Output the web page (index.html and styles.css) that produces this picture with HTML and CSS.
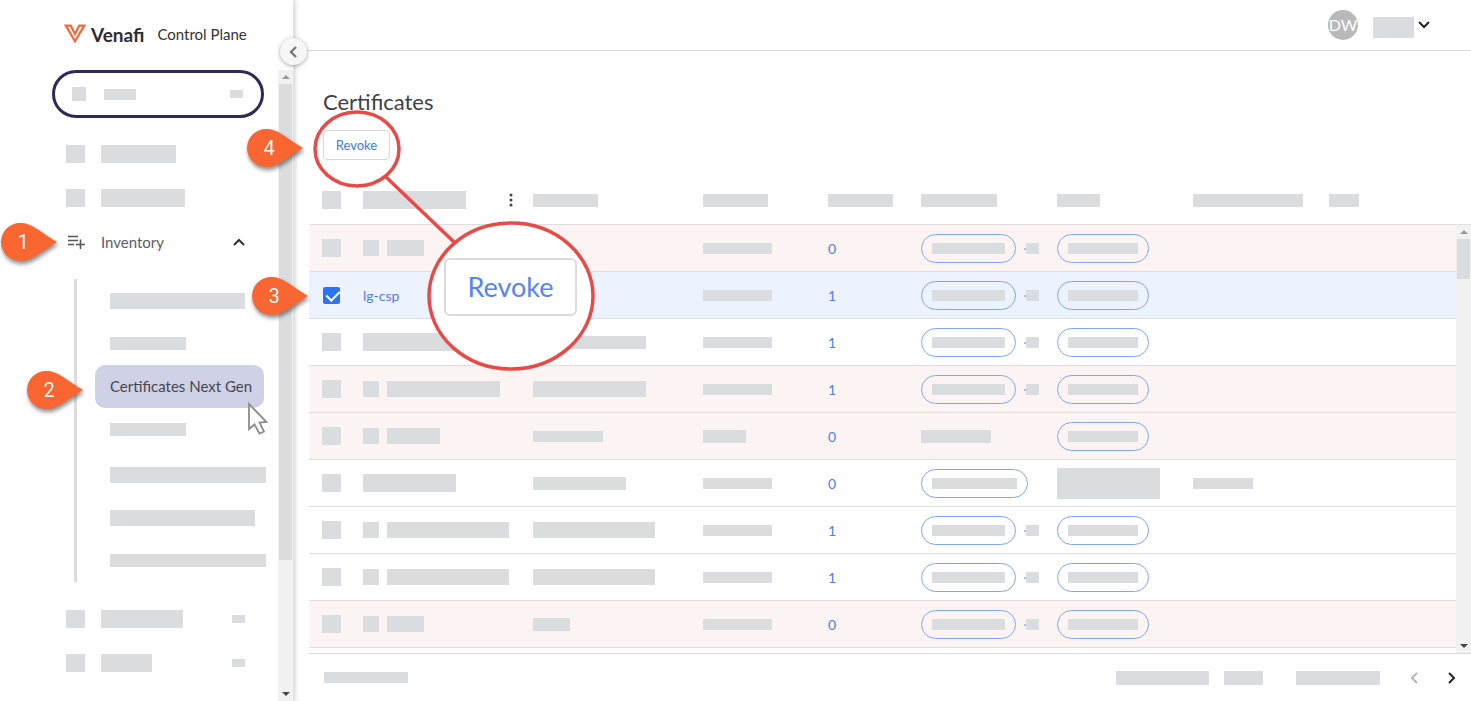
FILE: index.html
```html
<!DOCTYPE html>
<html lang="en">
<head>
    <meta charset="UTF-8">
    <meta name="viewport" content="width=device-width, initial-scale=1.0">
    <title>Venafi Control Plane - Certificates</title>
    <link rel="stylesheet" href="styles.css">
</head>
<body>
    <div class="app">
        <aside class="sidebar">
            <div class="brand">
                <svg class="brand-logo" width="22" height="20" viewBox="0 0 22 20" fill="none" stroke="#f26a3a">
                    <path d="M1.800 1.600H6.800L11 10L15.200 1.600H20.200L11 17.400Z" stroke-width="2.200"/>
                </svg>
                <span class="brand-name">Venafi</span>
                <span class="brand-product">Control Plane</span>
            </div>
            <div class="sidebar-body">
                <nav class="nav">
                    <div class="picker">
                        <span class="ph w14 h14"></span>
                        <span class="ph w32 h11"></span>
                        <span class="ph w13 h8 push"></span>
                    </div>
                    <ul class="nav-list">
                        <li class="nav-item"><span class="ph w19 h18"></span><span class="ph w75 h18"></span></li>
                        <li class="nav-item"><span class="ph w19 h18"></span><span class="ph w84 h18"></span></li>
                        <li>
                            <a class="nav-item" href="#">
                                <svg width="19" height="16" viewBox="0 0 19 16" fill="none" stroke="#55565a" stroke-width="1.600">
                                    <path d="M2 2.500H12M2 6.500H12M2 10.500H8M14.500 5.500V15M10 10.500H19"/>
                                </svg>
                                <span>Inventory</span>
                                <svg class="push" width="12" height="8" viewBox="0 0 12 8" fill="none" stroke="#333" stroke-width="2">
                                    <path d="M1 7L6 2L11 7"/>
                                </svg>
                            </a>
                            <div class="subnav">
                                <ul>
                                    <li><span class="ph w135 h16"></span></li>
                                    <li><span class="ph w76 h13"></span></li>
                                    <li><a class="active" href="#">Certificates Next Gen</a></li>
                                    <li><span class="ph w76 h13"></span></li>
                                </ul>
                                <ul>
                                    <li><span class="ph w156 h16"></span></li>
                                    <li><span class="ph w145 h16"></span></li>
                                    <li><span class="ph w156 h13"></span></li>
                                </ul>
                            </div>
                        </li>
                        <li class="nav-item"><span class="ph w19 h18"></span><span class="ph w82 h18"></span><span class="ph w13 h8 push"></span></li>
                        <li class="nav-item"><span class="ph w19 h18"></span><span class="ph w51 h18"></span><span class="ph w13 h8 push"></span></li>
                    </ul>
                </nav>
                <div class="scrollbar">
                    <span class="arrow-up"></span>
                    <div class="track"><div class="thumb thumb-nav"></div></div>
                    <span class="arrow-down"></span>
                </div>
            </div>
            <button class="collapse" aria-label="Collapse menu">
                <svg width="8" height="12" viewBox="0 0 8 12" fill="none" stroke="#777" stroke-width="2.400">
                    <path d="M7 1L2 6L7 11"/>
                </svg>
            </button>
        </aside>

        <main class="main">
            <header class="topbar">
                <span class="avatar">DW</span>
                <span class="ph w41 h21"></span>
                <button class="icon-btn" aria-label="Account menu">
                    <svg width="12" height="8" viewBox="0 0 12 8" fill="none" stroke="#222" stroke-width="2">
                        <path d="M1 1L6 6L11 1"/>
                    </svg>
                </button>
            </header>

            <div class="page-head">
                <h1>Certificates</h1>
                <button class="revoke">Revoke</button>
            </div>

            <div class="table-area">
                <table>
                    <colgroup>
                        <col class="col-check"><col class="col-name"><col class="col-name"><col class="col-date">
                        <col class="col-count"><col class="col-tag"><col class="col-tag"><col class="col-tag"><col>
                    </colgroup>
                    <thead>
                        <tr>
                            <th><span class="ph w19 h18"></span></th>
                            <th>
                                <div class="cell">
                                    <span class="ph w103 h18"></span>
                                    <button class="icon-btn col-menu" aria-label="Column menu">
                                        <svg width="4" height="14" viewBox="0 0 4 14" fill="#444">
                                            <circle cx="2" cy="2" r="1.500"/><circle cx="2" cy="7" r="1.500"/><circle cx="2" cy="12" r="1.500"/>
                                        </svg>
                                    </button>
                                </div>
                            </th>
                            <th><span class="ph w65 h13"></span></th>
                            <th><span class="ph w65 h13"></span></th>
                            <th><span class="ph w65 h13"></span></th>
                            <th><span class="ph w76 h13"></span></th>
                            <th><span class="ph w43 h13"></span></th>
                            <th><span class="ph w110 h13"></span></th>
                            <th><span class="ph w30 h13"></span></th>
                        </tr>
                    </thead>
                    <tbody>
                        <tr class="expired">
                            <td><span class="ph w19 h18"></span></td>
                            <td><div class="cell"><span class="ph w16 h16"></span><span class="ph w37 h16"></span></div></td>
                            <td></td>
                            <td><span class="ph w69 h11"></span></td>
                            <td><a href="#">0</a></td>
                            <td><div class="cell tags"><span class="tag"><span class="ph w73 h11"></span></span><span class="ph more w13 h11"></span></div></td>
                            <td><span class="tag"><span class="ph w70 h11"></span></span></td>
                            <td></td>
                            <td></td>
                        </tr>
                        <tr class="selected">
                            <td><input type="checkbox" aria-label="Select lg-csp" checked></td>
                            <td><a href="#">lg-csp</a></td>
                            <td></td>
                            <td><span class="ph w69 h11"></span></td>
                            <td><a href="#">1</a></td>
                            <td><div class="cell tags"><span class="tag"><span class="ph w73 h11"></span></span><span class="ph more w13 h11"></span></div></td>
                            <td><span class="tag"><span class="ph w70 h11"></span></span></td>
                            <td></td>
                            <td></td>
                        </tr>
                        <tr>
                            <td><span class="ph w19 h18"></span></td>
                            <td><span class="ph w122 h18"></span></td>
                            <td><span class="ph w113 h13"></span></td>
                            <td><span class="ph w69 h11"></span></td>
                            <td><a href="#">1</a></td>
                            <td><div class="cell tags"><span class="tag"><span class="ph w73 h11"></span></span><span class="ph more w13 h11"></span></div></td>
                            <td><span class="tag"><span class="ph w70 h11"></span></span></td>
                            <td></td>
                            <td></td>
                        </tr>
                        <tr class="expired">
                            <td><span class="ph w19 h18"></span></td>
                            <td><div class="cell"><span class="ph w16 h16"></span><span class="ph w113 h16"></span></div></td>
                            <td><span class="ph w113 h16"></span></td>
                            <td><span class="ph w69 h11"></span></td>
                            <td><a href="#">1</a></td>
                            <td><div class="cell tags"><span class="tag"><span class="ph w73 h11"></span></span><span class="ph more w13 h11"></span></div></td>
                            <td><span class="tag"><span class="ph w70 h11"></span></span></td>
                            <td></td>
                            <td></td>
                        </tr>
                        <tr class="expired">
                            <td><span class="ph w19 h18"></span></td>
                            <td><div class="cell"><span class="ph w16 h16"></span><span class="ph w53 h16"></span></div></td>
                            <td><span class="ph w70 h11"></span></td>
                            <td><span class="ph w43 h13"></span></td>
                            <td><a href="#">0</a></td>
                            <td><span class="ph w70 h13"></span></td>
                            <td><span class="tag"><span class="ph w70 h11"></span></span></td>
                            <td></td>
                            <td></td>
                        </tr>
                        <tr>
                            <td><span class="ph w19 h18"></span></td>
                            <td><span class="ph w93 h18"></span></td>
                            <td><span class="ph w93 h13"></span></td>
                            <td><span class="ph w69 h11"></span></td>
                            <td><a href="#">0</a></td>
                            <td><span class="tag"><span class="ph w85 h11"></span></span></td>
                            <td><span class="ph w103 h31"></span></td>
                            <td><span class="ph w60 h11"></span></td>
                            <td></td>
                        </tr>
                        <tr>
                            <td><span class="ph w19 h18"></span></td>
                            <td><div class="cell"><span class="ph w16 h16"></span><span class="ph w122 h16"></span></div></td>
                            <td><span class="ph w122 h16"></span></td>
                            <td><span class="ph w69 h11"></span></td>
                            <td><a href="#">1</a></td>
                            <td><div class="cell tags"><span class="tag"><span class="ph w73 h11"></span></span><span class="ph more w13 h11"></span></div></td>
                            <td><span class="tag"><span class="ph w70 h11"></span></span></td>
                            <td></td>
                            <td></td>
                        </tr>
                        <tr>
                            <td><span class="ph w19 h18"></span></td>
                            <td><div class="cell"><span class="ph w16 h16"></span><span class="ph w122 h16"></span></div></td>
                            <td><span class="ph w122 h16"></span></td>
                            <td><span class="ph w69 h11"></span></td>
                            <td><a href="#">1</a></td>
                            <td><div class="cell tags"><span class="tag"><span class="ph w73 h11"></span></span><span class="ph more w13 h11"></span></div></td>
                            <td><span class="tag"><span class="ph w70 h11"></span></span></td>
                            <td></td>
                            <td></td>
                        </tr>
                        <tr class="expired">
                            <td><span class="ph w19 h18"></span></td>
                            <td><div class="cell"><span class="ph w16 h16"></span><span class="ph w37 h16"></span></div></td>
                            <td><span class="ph w37 h13"></span></td>
                            <td><span class="ph w69 h11"></span></td>
                            <td><a href="#">0</a></td>
                            <td><div class="cell tags"><span class="tag"><span class="ph w73 h11"></span></span><span class="ph more w13 h11"></span></div></td>
                            <td><span class="tag"><span class="ph w70 h11"></span></span></td>
                            <td></td>
                            <td></td>
                        </tr>
                    </tbody>
                </table>
                <div class="scrollbar table-scroll">
                    <span class="arrow-up"></span>
                    <div class="track"><div class="thumb thumb-table"></div></div>
                    <span class="arrow-down"></span>
                </div>
            </div>

            <footer class="pager">
                <span class="ph w84 h11"></span>
                <div class="pager-right">
                    <span class="ph w93 h14"></span>
                    <span class="ph w39 h14"></span>
                    <span class="ph range w84 h14"></span>
                    <div class="pager-buttons">
                        <button class="icon-btn" aria-label="Previous page">
                            <svg width="16" height="12" viewBox="0 0 16 12" fill="none" stroke="#b5b5b5" stroke-width="2">
                                <path d="M10 1L5 6L10 11"/>
                            </svg>
                        </button>
                        <button class="icon-btn" aria-label="Next page">
                            <svg width="16" height="12" viewBox="0 0 16 12" fill="none" stroke="#222" stroke-width="2">
                                <path d="M6 1L11 6L6 11"/>
                            </svg>
                        </button>
                    </div>
                </div>
            </footer>
        </main>
    </div>

    <!-- Walkthrough annotations -->
    <svg class="rings" width="600" height="380" viewBox="0 0 600 380" fill="none" stroke="#e84a48" stroke-width="3.500">
        <ellipse cx="357" cy="149" rx="42" ry="37"/>
        <path d="M386 177L455 243"/>
        <ellipse cx="511" cy="296" rx="82" ry="73" fill="#fff"/>
    </svg>
    <span class="magnified">Revoke</span>

    <div class="step step-1">
        <svg width="57" height="38" viewBox="0 0 57 38"><path d="M19 0C31 0 38 8 56 19C38 30 31 38 19 38A19 19 0 0 1 19 0Z" fill="#f96632"/></svg>
        <span>1</span>
    </div>
    <div class="step step-2">
        <svg width="57" height="38" viewBox="0 0 57 38"><path d="M19 0C31 0 38 8 56 19C38 30 31 38 19 38A19 19 0 0 1 19 0Z" fill="#f96632"/></svg>
        <span>2</span>
    </div>
    <div class="step step-3">
        <svg width="57" height="38" viewBox="0 0 57 38"><path d="M19 0C31 0 38 8 56 19C38 30 31 38 19 38A19 19 0 0 1 19 0Z" fill="#f96632"/></svg>
        <span>3</span>
    </div>
    <div class="step step-4">
        <svg width="57" height="38" viewBox="0 0 57 38"><path d="M19 0C31 0 38 8 56 19C38 30 31 38 19 38A19 19 0 0 1 19 0Z" fill="#f96632"/></svg>
        <span>4</span>
    </div>

    <svg class="pointer" width="22" height="34" viewBox="0 0 22 34" fill="#fff" stroke="#8c8c8c" stroke-width="1.800">
        <path d="M2 2V27L7.500 22.500L12.500 31.500L17 29.500L12.500 20.500L19.500 20Z"/>
    </svg>
</body>
</html>
```
FILE: styles.css
```css
* {
    box-sizing: border-box;
}
body {
    margin: 0;
    font-family: Lato, "Open Sans", sans-serif;
    font-size: 15px;
    color: #4a4b50;
    background: #fff;
    overflow: hidden;
}
ul {
    list-style: none;
    margin: 0;
    padding: 0;
}
a {
    color: #4a7fe8;
    text-decoration: none;
}
button {
    font-family: inherit;
    cursor: pointer;
}
svg {
    display: block;
}
.app {
    display: flex;
    height: 100vh;
}

/* Sidebar */
.sidebar {
    position: relative;
    z-index: 1;
    flex: 0 0 294px;
    min-width: 0;
    display: flex;
    flex-direction: column;
    background: #fff;
    border-right: 1px solid #e2e2e2;
    box-shadow: 1px 0 5px rgba(0, 0, 0, 0.2);
}
.brand {
    flex: 0 0 70px;
    display: flex;
    align-items: center;
    padding: 0 0 2px 64px;
}
.brand-name {
    margin-left: 5px;
    font-size: 19px;
    font-weight: bold;
    color: #2c2d33;
}
.brand-product {
    margin-left: 13px;
    font-size: 15px;
    color: #333;
}
.sidebar-body {
    flex: 1;
    display: flex;
    min-height: 0;
}
.nav {
    flex: 1;
    min-width: 0;
    padding: 0 14px 0 52px;
    overflow: hidden;
}
.picker {
    display: flex;
    align-items: center;
    gap: 18px;
    height: 48px;
    padding: 0 18px 0 17px;
    border: 3px solid #2f2a55;
    border-radius: 24px;
}
.nav-list {
    padding-top: 14px;
}
.nav-item {
    display: flex;
    align-items: center;
    gap: 16px;
    height: 44px;
    padding: 0 19px 0 14px;
    color: #5b5c61;
}
.push {
    margin-left: auto;
}
.subnav {
    margin: 15px 0 15px 22px;
    border-left: 3px solid #dcdcde;
    padding-left: 18px;
}
.subnav ul + ul {
    padding-top: 2px;
}
.subnav li {
    display: flex;
    align-items: center;
    height: 43px;
    padding-left: 15px;
}
.subnav .active {
    flex: 1;
    margin-left: -15px;
    padding-left: 15px;
    line-height: 43px;
    border-radius: 10px;
    background: #cfd2e6;
    color: #45464f;
    white-space: nowrap;
}
.collapse {
    position: absolute;
    top: 38px;
    right: -14px;
    display: flex;
    align-items: center;
    justify-content: center;
    width: 27px;
    height: 27px;
    padding: 0 2px 0 0;
    border: none;
    border-radius: 50%;
    background: #f6f6f6;
    box-shadow: 0 1px 4px rgba(0, 0, 0, 0.35);
}

/* Scrollbars */
.scrollbar {
    flex: 0 0 15px;
    display: flex;
    flex-direction: column;
    align-items: center;
    background: #f1f1f1;
}
.scrollbar .track {
    flex: 1;
    align-self: stretch;
    padding: 0 1px;
}
.arrow-up,
.arrow-down {
    margin: 5px 0;
    border: 4px solid transparent;
}
.arrow-up {
    border-top: none;
    border-bottom-color: #999;
}
.arrow-down {
    border-bottom: none;
    border-top-color: #444;
}
.thumb {
    background: #d9dddf;
}
.thumb-nav {
    height: 79%;
}
.thumb-table {
    height: 10%;
}

/* Main area */
.main {
    flex: 1;
    min-width: 0;
    display: flex;
    flex-direction: column;
    padding-left: 15px;
}
.topbar {
    flex: 0 0 51px;
    display: flex;
    align-items: center;
    justify-content: flex-end;
    margin-left: -15px;
    padding-right: 41px;
    border-bottom: 1px solid #dcdcdc;
}
.topbar .ph {
    margin-top: 4px;
}
.avatar {
    width: 30px;
    height: 30px;
    margin-right: 15px;
    border-radius: 50%;
    background: #b9b9b9;
    color: #fff;
    font-size: 16px;
    line-height: 30px;
    text-align: center;
}
.icon-btn {
    padding: 0;
    border: none;
    background: none;
}
.topbar .icon-btn {
    margin-left: 4px;
}
.page-head {
    padding: 37px 14px 16px;
}
.page-head h1 {
    margin: 0 0 14px;
    font-size: 22px;
    font-weight: normal;
    line-height: 28px;
    color: #3f4146;
}
.revoke {
    display: block;
    width: 67px;
    height: 30px;
    padding: 0;
    border: 1px solid #d8d8dc;
    border-radius: 4px;
    background: #fff;
    color: #4479f0;
    font-size: 13px;
}

/* Certificates table */
.table-area {
    flex: 1;
    display: flex;
    align-items: flex-start;
    min-height: 0;
    overflow: hidden;
}
table {
    flex: 1;
    min-width: 0;
    border-collapse: separate;
    border-spacing: 0;
    table-layout: fixed;
}
.col-check { width: 54px; }
.col-name { width: 170px; }
.col-date { width: 125px; }
.col-count { width: 93px; }
.col-tag { width: 136px; }
th,
td {
    height: 47px;
    padding: 0;
    border-bottom: 1px solid #dfdfe2;
    text-align: left;
    vertical-align: middle;
    font-size: 14px;
}
th {
    height: 49px;
}
th:first-child,
td:first-child {
    padding-left: 13px;
}
.expired td {
    background: #fcf4f3;
}
.selected td {
    background: #edf3fe;
}
.cell {
    display: flex;
    align-items: center;
    gap: 8px;
}
.tags {
    gap: 10px;
}
.col-menu {
    margin-left: 35px;
}
.tag {
    display: flex;
    align-items: center;
    width: fit-content;
    height: 29px;
    padding: 0 10px;
    border: 1px solid #7fa5f2;
    border-radius: 15px;
}
input[type="checkbox"] {
    appearance: none;
    display: block;
    width: 17px;
    height: 17px;
    margin: 0 1px;
    border-radius: 2px;
    background: #2a74f5;
}
input[type="checkbox"]:checked::after {
    content: "";
    display: block;
    width: 6px;
    height: 11px;
    margin: 0 0 0 6px;
    border: solid #fff;
    border-width: 0 2px 2px 0;
    transform: translateY(1px) rotate(45deg);
}
.table-scroll {
    align-self: stretch;
    margin-top: 48px;
    border-top: 1px solid #dfdfe2;
}

/* Pager */
.pager {
    flex: 0 0 48px;
    display: flex;
    align-items: center;
    justify-content: space-between;
    padding: 0 12px 0 15px;
    border-top: 1px solid #dcdce0;
}
.pager-right {
    display: flex;
    align-items: center;
    gap: 15px;
}
.pager-right .range {
    margin-left: 18px;
}
.pager-buttons {
    display: flex;
    gap: 20px;
    margin-left: 12px;
}

/* Placeholder blocks */
.ph {
    display: block;
    flex: none;
    background: #d9dddf;
}
.more {
    position: relative;
}
.more::before {
    content: "";
    position: absolute;
    left: -2px;
    top: 5px;
    width: 2px;
    height: 2px;
    background: #a9bde6;
}
.h8 { height: 8px; }
.h11 { height: 11px; }
.h13 { height: 13px; }
.h14 { height: 14px; }
.h16 { height: 16px; }
.h18 { height: 18px; }
.h21 { height: 21px; }
.h31 { height: 31px; }
.w13 { width: 13px; }
.w14 { width: 14px; }
.w16 { width: 16px; }
.w19 { width: 19px; }
.w30 { width: 30px; }
.w32 { width: 32px; }
.w37 { width: 37px; }
.w39 { width: 39px; }
.w41 { width: 41px; }
.w43 { width: 43px; }
.w51 { width: 51px; }
.w53 { width: 53px; }
.w60 { width: 60px; }
.w65 { width: 65px; }
.w69 { width: 69px; }
.w70 { width: 70px; }
.w73 { width: 73px; }
.w75 { width: 75px; }
.w76 { width: 76px; }
.w82 { width: 82px; }
.w84 { width: 84px; }
.w85 { width: 85px; }
.w93 { width: 93px; }
.w103 { width: 103px; }
.w110 { width: 110px; }
.w113 { width: 113px; }
.w122 { width: 122px; }
.w135 { width: 135px; }
.w145 { width: 145px; }
.w156 { width: 156px; }

/* Walkthrough annotations */
.rings {
    position: absolute;
    left: 0;
    top: 0;
    z-index: 2;
    pointer-events: none;
}
.magnified {
    position: absolute;
    left: 444px;
    top: 258px;
    z-index: 3;
    width: 133px;
    height: 58px;
    border: 2px solid #dadadd;
    border-radius: 6px;
    background: #fff;
    color: #5585f2;
    font-size: 27px;
    line-height: 54px;
    text-align: center;
}
.step {
    position: absolute;
    z-index: 4;
    width: 57px;
    height: 38px;
    filter: drop-shadow(1px 3px 2px rgba(0, 0, 0, 0.45));
}
.step span {
    position: absolute;
    left: 0;
    top: 0;
    width: 44px;
    color: #fff;
    font-family: Roboto, sans-serif;
    font-size: 20px;
    line-height: 38px;
    text-align: center;
}
.step-1 {
    left: 1px;
    top: 223px;
}
.step-2 {
    left: 27px;
    top: 371px;
}
.step-3 {
    left: 252px;
    top: 277px;
}
.step-4 {
    left: 247px;
    top: 129px;
}
.pointer {
    position: absolute;
    left: 247px;
    top: 402px;
    z-index: 4;
}
```
